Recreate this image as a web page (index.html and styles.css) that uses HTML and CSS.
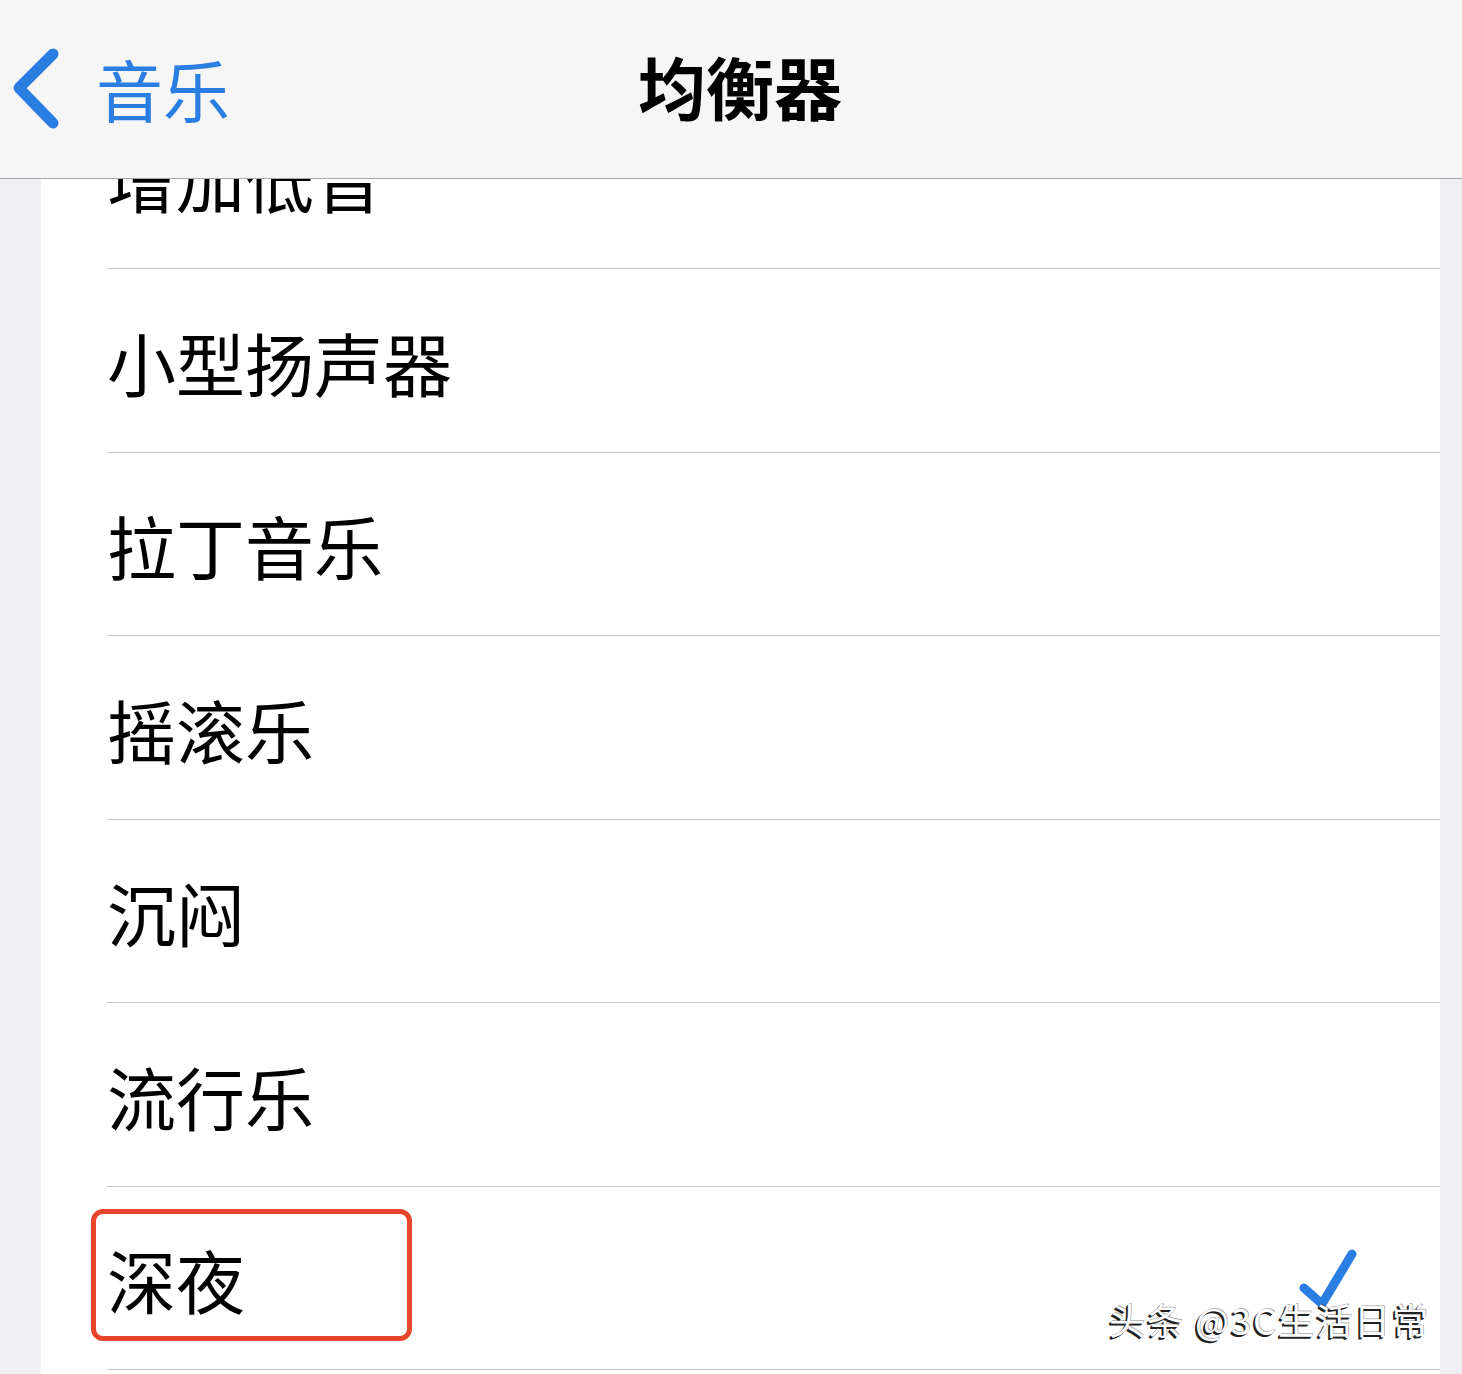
FILE: index.html
```html
<!DOCTYPE html>
<html lang="zh">
<head>
<meta charset="utf-8">
<link rel="stylesheet" href="styles.css">
</head>
<body>
<div class="screen">
  <header class="navbar">
    <div class="back">
      <svg class="chevron" width="50" height="82" viewBox="0 0 50 82"><path d="M41 6 L7 40 L41 75" fill="none" stroke="#2a7de1" stroke-width="11" stroke-linecap="round" stroke-linejoin="round"/></svg>
      <span class="back-text">音乐</span>
    </div>
    <h1 class="title">均衡器</h1>
  </header>
  <main class="content">
    <ul class="list">
      <li class="row"><span class="label">增加低音</span></li>
      <li class="row"><span class="label">小型扬声器</span></li>
      <li class="row"><span class="label">拉丁音乐</span></li>
      <li class="row"><span class="label">摇滚乐</span></li>
      <li class="row"><span class="label">沉闷</span></li>
      <li class="row"><span class="label">流行乐</span></li>
      <li class="row selected">
        <span class="label">深夜</span>
        <span class="highlight"></span>
        <svg class="check" width="64" height="66" viewBox="0 0 64 66"><path d="M8 42 L26 58 L56 8" fill="none" stroke="#2a7de1" stroke-width="9" stroke-linecap="round" stroke-linejoin="round"/></svg>
      </li>
      <li class="row"><span class="label">&nbsp;</span></li>
    </ul>
    <div class="watermark">头条 @3C生活日常</div>
  </main>
</div>
</body>
</html>
```
FILE: styles.css
```css
html, body {
  margin: 0;
  padding: 0;
  background: #efeff4;
}
body {
  font-family: "Noto Sans CJK SC", "Noto Sans", sans-serif;
  color: #000;
}
.screen {
  width: 1462px;
  height: 1374px;
  display: flex;
  flex-direction: column;
  overflow: hidden;
}
.navbar {
  height: 178px;
  flex: none;
  background: #f6f6f6;
  border-bottom: 1px solid #a9a9a9;
  position: relative;
  display: flex;
  align-items: center;
  z-index: 2;
}
.back {
  display: flex;
  align-items: center;
  padding-left: 12px;
  margin-top: 0;
}
.chevron {
  display: block;
}
.back-text {
  color: #2a7de1;
  font-size: 67px;
  line-height: 1;
  margin-left: 34px;
  margin-top: -4px;
}
.title {
  position: absolute;
  left: 0;
  right: 0;
  top: 0;
  bottom: 0;
  margin: 0;
  display: flex;
  align-items: center;
  justify-content: center;
  padding-left: 18px;
  font-size: 68px;
  font-weight: 700;
  line-height: 1;
  margin-top: -6px;
}
.content {
  flex: 1;
  position: relative;
  overflow: hidden;
}
.list {
  list-style: none;
  margin: -93.5px 22px 0 41px;
  padding: 0;
  background: #fff;
}
.row {
  height: 183.5px;
  box-sizing: border-box;
  margin-left: 66px;
  border-bottom: 1px solid #c8c7cc;
  display: flex;
  align-items: center;
  position: relative;
}
.label {
  font-size: 69px;
  line-height: 1;
  margin-left: 0;
  margin-top: 4px;
}
.selected {
  justify-content: space-between;
}
.check {
  display: block;
  margin-right: 80px;
  margin-top: 2px;
}
.highlight {
  position: absolute;
  left: -16px;
  top: 22px;
  width: 321px;
  height: 132px;
  box-sizing: border-box;
  border: 5px solid #e8452c;
  border-radius: 12px;
}
.watermark {
  position: absolute;
  right: 32px;
  bottom: 37px;
  font-size: 36px;
  letter-spacing: 2px;
  line-height: 1;
  color: #fff;
  text-shadow: -2px 2px 0 #222, -1px 1px 0 #222, 1px -1px 0 rgba(0,0,0,0.3);
  z-index: 3;
}
```
